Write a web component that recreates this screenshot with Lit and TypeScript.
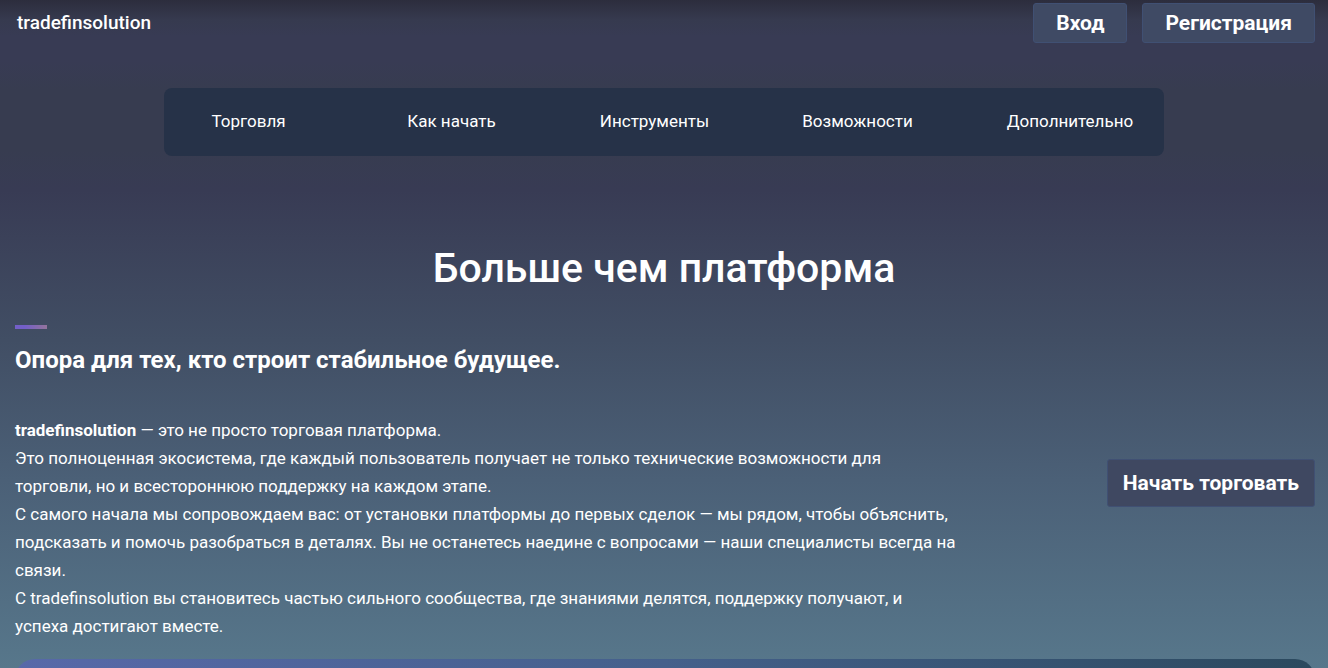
import { LitElement, html, css } from "lit";
import { customElement } from "lit/decorators.js";

@customElement("app-root")
export class AppRoot extends LitElement {
  static styles = css`
    :host {
      display: block;
      height: 100vh;
      box-sizing: border-box;
      overflow: hidden;
      color: #fff;
      font-family: "Roboto", "Liberation Sans", sans-serif;
      font-size: 17px;
      line-height: 28px;
      background: linear-gradient(#2c2d3d 0, #363a4f 20px, #383b54 36px, #383b54 60px, #373c50 90px, #373c50 150px, #383b54 190px, #414e64 340px, #4b6077 480px, #57778b 668px);
    }
    a {
      color: inherit;
      text-decoration: none;
    }
    .top {
      display: flex;
      align-items: flex-start;
      justify-content: space-between;
      padding: 3px 13px 0 17px;
    }
    .brand {
      font-size: 19px;
      font-weight: 500;
      line-height: 40px;
    }
    .actions {
      display: flex;
      gap: 15px;
    }
    .btn {
      box-sizing: border-box;
      font: inherit;
      font-size: 21px;
      font-weight: 700;
      line-height: 26px;
      color: #fff;
      padding: 6px 22px;
      background: #3f4a64;
      border: 1px solid #405073;
      border-radius: 3px;
      cursor: pointer;
      white-space: nowrap;
    }
    .cta {
      padding: 10px 15px;
      background: #3f4861;
    }
    .menu {
      display: flex;
      max-width: 1000px;
      box-sizing: border-box;
      margin: 45px auto 0;
      padding: 19px 0 21px;
      background: #263248;
      border-radius: 8px;
    }
    .menu a {
      flex: 203 1 0;
      text-align: center;
    }
    .menu a:first-child {
      flex-grow: 169;
      margin-right: 17px;
    }
    .menu a:last-child {
      flex-grow: 188;
      margin-left: 17px;
    }
    h1 {
      margin: 85px 16px 0;
      font-size: 41px;
      line-height: 54px;
      font-weight: 500;
      text-align: center;
    }
    .accent {
      width: 32px;
      height: 4px;
      background: linear-gradient(90deg, #735fc8 30%, #93749b);
    }
    h2 {
      margin: 14px 0 39px;
      font-size: 24px;
      line-height: 34px;
      font-weight: 700;
    }
    .intro {
      display: flex;
      align-items: center;
      justify-content: space-between;
      margin: 30px 13px 0 15px;
    }
    .copy {
      flex: 0 1 950px;
    }
    p {
      margin: 0;
    }
    .panel {
      height: 80px;
      margin: 19px 13px 0 15px;
      border-radius: 20px;
      background: linear-gradient(90deg, #5769a9, #44608b 50%, #2b495e);
    }
  `;

  private links = ["Торговля", "Как начать", "Инструменты", "Возможности", "Дополнительно"];

  render() {
    return html`
      <header class="top">
        <a class="brand" href="#">tradefinsolution</a>
        <div class="actions">
          <button class="btn">Вход</button>
          <button class="btn">Регистрация</button>
        </div>
      </header>
      <nav class="menu">${this.links.map((t) => html`<a href="#">${t}</a>`)}</nav>
      <main>
        <h1>Больше чем платформа</h1>
        <section class="intro">
          <div class="copy">
            <div class="accent"></div>
            <h2>Опора для тех, кто строит стабильное будущее.</h2>
            <p><strong>tradefinsolution</strong> — это не просто торговая платформа.</p>
            <p>Это полноценная экосистема, где каждый пользователь получает не только технические возможности для торговли,&nbsp;но и всестороннюю поддержку на каждом этапе.</p>
            <p>С самого начала мы сопровождаем вас: от установки платформы до первых сделок — мы рядом, чтобы объяснить, подсказать и помочь разобраться в деталях. Вы не останетесь наедине с вопросами — наши специалисты всегда на связи.</p>
            <p>С tradefinsolution вы становитесь частью сильного сообщества, где знаниями делятся, поддержку получают, и успеха&nbsp;достигают вместе.</p>
          </div>
          <button class="btn cta">Начать торговать</button>
        </section>
        <div class="panel"></div>
      </main>
    `;
  }
}
